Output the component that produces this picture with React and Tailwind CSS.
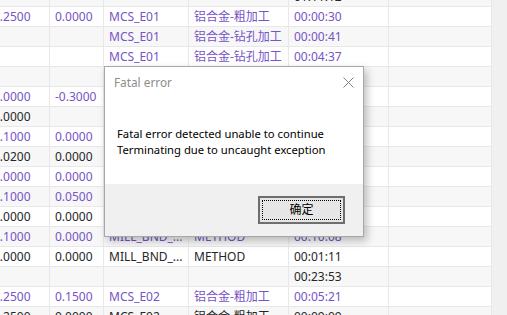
import React from 'react';

const P = 'text-[#7653c6]';
const K = 'text-[#262626]';

// each row: [col1, col2, col3, col4, col5, purple?]
const rows = [
  ['', '', '', '', '01:11:12', false],
  ['0.2500', '0.0000', 'MCS_E01', '铝合金-粗加工', '00:00:30', true],
  ['', '', 'MCS_E01', '铝合金-钻孔加工', '00:00:41', true],
  ['', '', 'MCS_E01', '铝合金-钻孔加工', '00:04:37', true],
  ['', '', 'MCS_E01', '铝合金-钻孔加工', '00:02:15', true],
  ['0.0000', '-0.3000', 'MCS_E01', '铝合金-钻孔加工', '00:01:02', true],
  ['0.0000', '', 'MCS_E01', '铝合金-钻孔加工', '00:00:48', false],
  ['0.1000', '0.0000', 'MCS_E01', '铝合金-粗加工', '00:03:20', true],
  ['0.0200', '0.0000', 'MCS_E01', '铝合金-精加工', '00:02:44', false],
  ['0.0000', '0.0000', 'MCS_E01', '铝合金-精加工', '00:01:36', true],
  ['0.1000', '0.0500', 'MCS_E01', '铝合金-粗加工', '00:04:10', true],
  ['0.0000', '0.0000', 'MCS_E01', '铝合金-精加工', '00:00:52', false],
  ['0.1000', '0.0000', 'MILL_BND_...', 'METHOD', '00:10:08', true],
  ['0.0000', '0.0000', 'MILL_BND_...', 'METHOD', '00:01:11', false],
  ['', '', '', '', '00:23:53', false],
  ['0.2500', '0.1500', 'MCS_E02', '铝合金-粗加工', '00:05:21', true],
  ['0.2500', '0.0000', 'MCS_E02', '铝合金-粗加工', '00:09:09', false],
];

const widths = ['w-[62px]', 'w-[54px]', 'w-[85px]', 'w-[100px]', 'w-[100px]', 'w-[103px]'];

const Row = ({ row, i }) => {
  const color = row[5] ? P : K;
  const cells = [row[0], row[1], row[2], row[3], row[4], ''];
  return (
    <div className={`flex h-[20px] border-b border-[#e8e8e8] ${i % 2 === 1 ? 'bg-white' : 'bg-[#f7f7f7]'}`}>
      {cells.map((c, j) => (
        <div
          key={j}
          className={`${widths[j]} shrink-0 h-full flex items-center pl-[5px] border-r border-[#e8e8e8] whitespace-nowrap overflow-hidden ${color}`}
        >
          {c}
        </div>
      ))}
    </div>
  );
};

const App = () => {
  return (
    <div
      className="relative w-[507px] h-[315px] overflow-hidden bg-white flex text-[12px]"
      style={{ fontFamily: '"Noto Sans", "Noto Sans CJK SC", sans-serif' }}
    >
      <div className="w-[492px] shrink-0 overflow-hidden">
        <div className="-mt-[13px] -ml-[12px] w-[504px]">
          {rows.map((r, i) => (
            <Row key={i} row={r} i={i} />
          ))}
        </div>
      </div>
      <div className="flex-1 bg-[#f0f0f0]" />

      {/* message box */}
      <div className="absolute left-[104px] top-[66px] w-[260px] h-[171px] bg-white border border-[#a8a8a8] shadow-[3px_4px_8px_rgba(0,0,0,0.25)] flex flex-col">
        <div className="h-[30px] flex items-center justify-between pl-[9px] pr-[9px] pt-[1px]">
          <span className="text-[11.8px] text-[#8c8c8c]">Fatal error</span>
          <svg width="11" height="11" viewBox="0 0 11 11" className="text-[#808080]">
            <path d="M0.5 0.5 L10.5 10.5 M10.5 0.5 L0.5 10.5" stroke="currentColor" strokeWidth="1" fill="none" />
          </svg>
        </div>
        <div className="flex-1 bg-white pl-[12px] pt-[29px] text-[11.25px] leading-[16px] text-black">
          <div>Fatal error detected unable to continue</div>
          <div>Terminating due to uncaught exception</div>
        </div>
        <div className="h-[52px] bg-[#f0f0f0] flex items-center justify-end pr-[18px]">
          <div className="w-[87px] h-[28px] border-2 border-[#6e6e6e] bg-[#e6e6e6] p-[2px]">
            <div className="w-full h-full border border-dotted border-black flex items-center justify-center text-[12px] text-black">
              确定
            </div>
          </div>
        </div>
      </div>
    </div>
  );
};

export default App;
